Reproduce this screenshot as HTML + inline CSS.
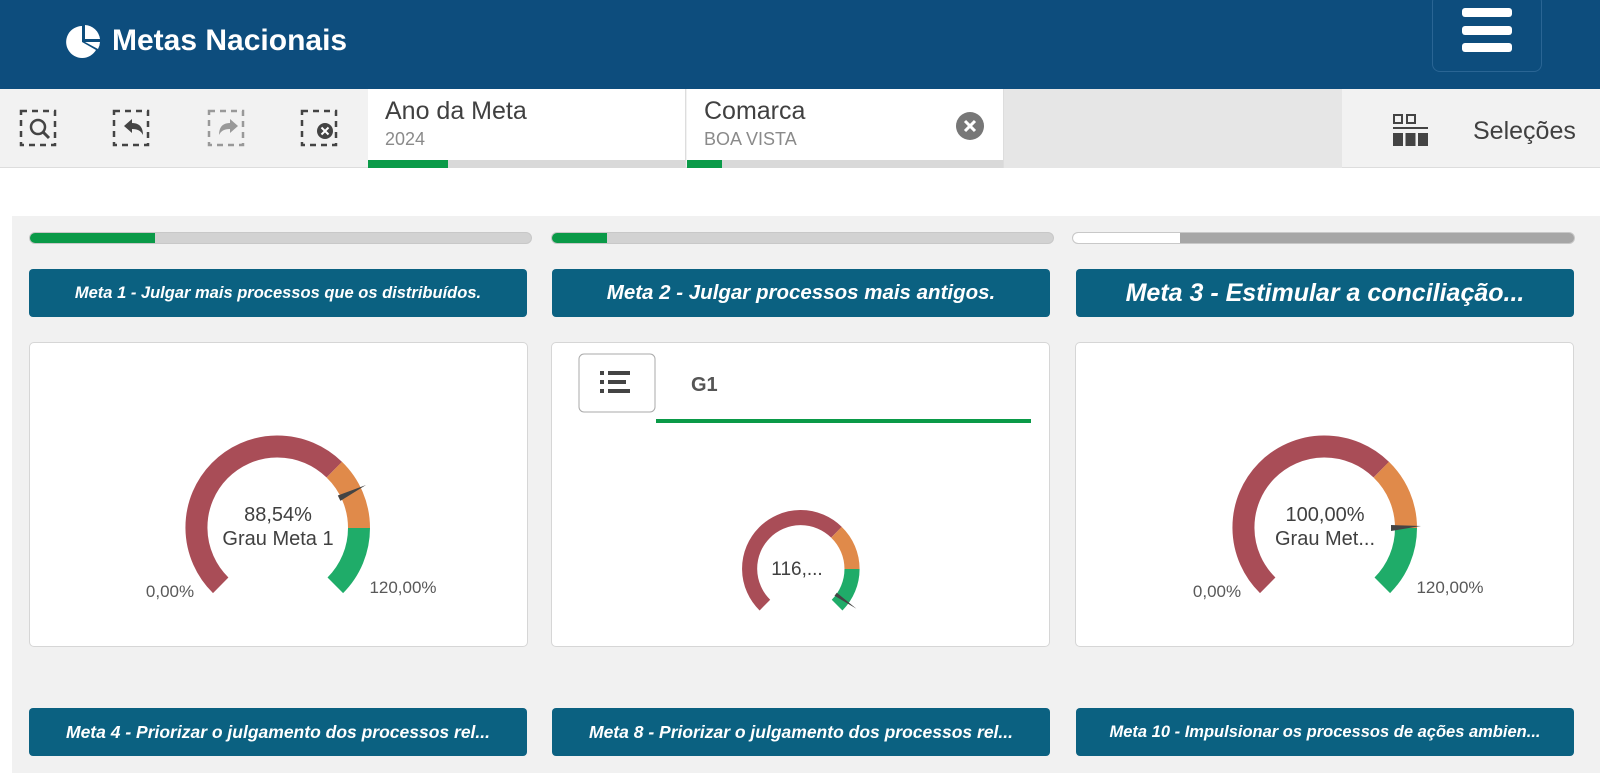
<!DOCTYPE html>
<html><head><meta charset="utf-8"><style>
*{margin:0;padding:0;box-sizing:border-box}
body{width:1600px;height:773px;overflow:hidden;background:#fff;font-family:"Liberation Sans",sans-serif;position:relative}
.abs{position:absolute}
.hdr{left:0;top:0;width:1600px;height:89px;background:#0d4d7d}
.tb{left:0;top:89px;width:1600px;height:79px;background:#f2f2f2;border-bottom:1px solid #ddd}
.fbox{top:89px;height:79px;background:#fff;border-right:1px solid #ddd}
.fbox .t{position:absolute;left:17px;top:8px;font-size:25px;color:#404040}
.fbox .s{position:absolute;left:17px;top:40px;font-size:18px;color:#8a8a8a}
.fbox .bar{position:absolute;left:0;bottom:0;width:100%;height:8px;background:#d9d9d9}
.fbox .bar i{position:absolute;left:0;top:0;height:8px;background:#0a9a48}
.panel{left:12px;top:216px;width:1588px;height:557px;background:#f1f1f1}
.pb{top:232px;height:12px;width:503px;border-radius:6px;background:#d2d2d2;border:1px solid #c8c8c8;overflow:hidden}
.pb i{position:absolute;left:0;top:0;height:100%}
.tt{height:48px;width:498px;background:#0b6181;border-radius:4px;color:#fff;font-weight:bold;font-style:italic;text-align:center;white-space:nowrap;display:flex;align-items:center;justify-content:center}
.card{top:342px;width:499px;height:305px;background:#fff;border:1px solid #d6d6d6;border-radius:5px}
.card svg{position:absolute;left:0;top:0}
</style></head><body>
<div class="abs hdr">
  <svg class="abs" style="left:66px;top:24px" width="36" height="36" viewBox="0 0 36 36"><path d="M16 2 A16 16 0 1 0 30 26 L16 18 Z" fill="#fff"/><path d="M19 1 A16 16 0 0 1 34 15 L19 15Z" fill="#fff"/><path d="M19 18 L34 18 A16 16 0 0 1 32 25 Z" fill="#fff"/></svg>
  <div class="abs" style="left:112px;top:24px;color:#fff;font-size:30px;font-weight:bold">Metas Nacionais</div>
  <div class="abs" style="left:1432px;top:-6px;width:110px;height:78px;border:1px solid #2a6594;border-radius:8px"></div>
  <div class="abs" style="left:1462px;top:8px;width:50px;height:9px;background:#fff;border-radius:3px"></div>
  <div class="abs" style="left:1462px;top:26px;width:50px;height:9px;background:#fff;border-radius:3px"></div>
  <div class="abs" style="left:1462px;top:43px;width:50px;height:9px;background:#fff;border-radius:3px"></div>
</div>
<div class="abs tb"></div>
<svg class="abs" style="left:0;top:89px" width="368" height="79">
 <g fill="none" stroke-width="2.5" stroke-dasharray="6 5">
  <rect x="21" y="22" width="34" height="34" stroke="#444"/>
  <rect x="114" y="22" width="34" height="34" stroke="#444"/>
  <rect x="209" y="22" width="34" height="34" stroke="#999"/>
  <rect x="302" y="22" width="34" height="34" stroke="#444"/>
 </g>
 <circle cx="38" cy="38" r="7" fill="none" stroke="#444" stroke-width="2.5"/><line x1="43" y1="43" x2="49" y2="49" stroke="#444" stroke-width="3"/>
 <path d="M124 37 l8 -7 v4 c8 0 11 5 11 12 c-2 -4 -5 -6 -11 -6 v4z" fill="#444"/>
 <path d="M238 37 l-8 -7 v4 c-8 0 -11 5 -11 12 c2 -4 5 -6 11 -6 v4z" fill="#999"/>
 <circle cx="325" cy="42" r="8" fill="#444"/><path d="M321.5 38.5l7 7M328.5 38.5l-7 7" stroke="#fff" stroke-width="2"/>
</svg>
<div class="abs fbox" style="left:368px;width:318px"><div class="t">Ano da Meta</div><div class="s">2024</div><div class="bar"><i style="width:80px"></i></div></div>
<div class="abs fbox" style="left:687px;width:317px"><div class="t">Comarca</div><div class="s">BOA VISTA</div><div class="bar"><i style="width:35px"></i></div>
 <svg class="abs" style="left:268px;top:22px" width="30" height="30"><circle cx="15" cy="15" r="14" fill="#777"/><path d="M10 10l10 10M20 10l-10 10" stroke="#fff" stroke-width="3"/></svg></div>
<div class="abs" style="left:1004px;top:89px;width:338px;height:79px;background:#e6e6e6"></div>
<svg class="abs" style="left:1393px;top:113px" width="36" height="36"><rect x="1" y="2" width="8" height="8" fill="none" stroke="#444" stroke-width="2"/><rect x="14" y="2" width="8" height="8" fill="none" stroke="#444" stroke-width="2"/><rect x="0" y="14" width="35" height="2" fill="#444"/><rect x="0" y="20" width="10" height="13" fill="#444"/><rect x="12.5" y="20" width="10" height="13" fill="#444"/><rect x="25" y="20" width="10" height="13" fill="#444"/></svg>
<div class="abs" style="left:1473px;top:117px;font-size:25px;color:#404040">Seleções</div>

<div class="abs panel"></div>
<div class="abs pb" style="left:29px"><i style="width:125px;background:#0a9a48"></i></div>
<div class="abs pb" style="left:551px"><i style="width:55px;background:#0a9a48"></i></div>
<div class="abs pb" style="left:1072px;background:#a6a6a6"><i style="width:107px;background:#fff"></i></div>

<div class="abs tt" style="left:29px;top:269px;font-size:16.5px">Meta 1 - Julgar mais processos que os distribuídos.</div>
<div class="abs tt" style="left:552px;top:269px;font-size:20.5px">Meta 2 - Julgar processos mais antigos.</div>
<div class="abs tt" style="left:1076px;top:269px;font-size:25px">Meta 3 - Estimular a conciliação...</div>

<div class="abs card" style="left:29px">
<svg width="499" height="305"><g transform="translate(248,185)" fill="none" stroke-width="22">
<path d="M-57.3 57.3 A81 81 0 1 1 56.3 -58.3" stroke="#a94d57"/><path d="M56.3 -58.3 A81 81 0 0 1 81 0" stroke="#e08a4a"/><path d="M81 0 A81 81 0 0 1 57.3 57.3" stroke="#1fac69"/>
<polygon points="62.4,-27.1 59.8,-32.5 88,-43" fill="#444" stroke="none"/>
<text x="0" y="-7" text-anchor="middle" font-size="20" fill="#404040" stroke="none" font-family="Liberation Sans">88,54%</text>
<text x="0" y="17" text-anchor="middle" font-size="20" fill="#404040" stroke="none" font-family="Liberation Sans">Grau Meta 1</text>
<text x="-108" y="69" text-anchor="middle" font-size="17" fill="#595959" stroke="none" font-family="Liberation Sans">0,00%</text>
<text x="125" y="65" text-anchor="middle" font-size="17" fill="#595959" stroke="none" font-family="Liberation Sans">120,00%</text>
</g></svg></div>

<div class="abs card" style="left:551px">
<svg width="499" height="305">
<rect x="27" y="11" width="76" height="58" rx="5" fill="#fff" stroke="#aaa"/>
<g fill="#444"><rect x="48" y="28" width="4" height="4"/><rect x="48" y="37" width="4" height="4"/><rect x="48" y="46" width="4" height="4"/><rect x="56" y="28" width="22" height="4"/><rect x="56" y="37" width="18" height="4"/><rect x="56" y="46" width="22" height="4"/></g>
<text x="139" y="48" font-size="20" font-weight="bold" fill="#555" font-family="Liberation Sans">G1</text>
<rect x="104" y="76" width="375" height="4" fill="#0a9a48"/>
<g transform="translate(249,226) scale(0.63)" fill="none" stroke-width="24">
<path d="M-57.3 57.3 A81 81 0 1 1 56.3 -58.3" stroke="#a94d57"/><path d="M56.3 -58.3 A81 81 0 0 1 81 0" stroke="#e08a4a"/><path d="M81 0 A81 81 0 0 1 57.3 57.3" stroke="#1fac69"/>
<polygon points="53.2,42.4 56.8,37.6 88,63" fill="#444" stroke="none"/>
</g>
<text x="245" y="232" text-anchor="middle" font-size="19" fill="#404040" font-family="Liberation Sans">116,...</text>
</svg></div>

<div class="abs card" style="left:1075px">
<svg width="499" height="305"><g transform="translate(249,185)" fill="none" stroke-width="22">
<path d="M-57.3 57.3 A81 81 0 1 1 56.3 -58.3" stroke="#a94d57"/><path d="M56.3 -58.3 A81 81 0 0 1 81 0" stroke="#e08a4a"/><path d="M81 0 A81 81 0 0 1 57.3 57.3" stroke="#1fac69"/>
<polygon points="66,-3 66,3 96,-2" fill="#444" stroke="none"/>
<text x="0" y="-7" text-anchor="middle" font-size="20" fill="#404040" stroke="none" font-family="Liberation Sans">100,00%</text>
<text x="0" y="17" text-anchor="middle" font-size="20" fill="#404040" stroke="none" font-family="Liberation Sans">Grau Met...</text>
<text x="-108" y="69" text-anchor="middle" font-size="17" fill="#595959" stroke="none" font-family="Liberation Sans">0,00%</text>
<text x="125" y="65" text-anchor="middle" font-size="17" fill="#595959" stroke="none" font-family="Liberation Sans">120,00%</text>
</g></svg></div>

<div class="abs tt" style="left:29px;top:708px;font-size:17.5px">Meta 4 - Priorizar o julgamento dos processos rel...</div>
<div class="abs tt" style="left:552px;top:708px;font-size:17.5px">Meta 8 - Priorizar o julgamento dos processos rel...</div>
<div class="abs tt" style="left:1076px;top:708px;font-size:16.5px">Meta 10 - Impulsionar os processos de ações ambien...</div>
</body></html>
